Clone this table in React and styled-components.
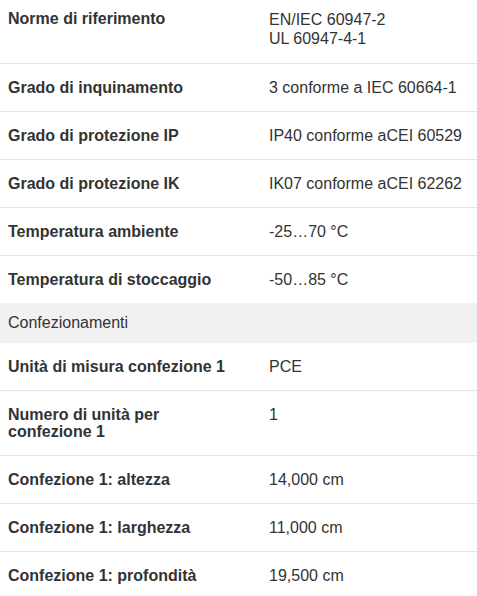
import React from 'react'
import styled, { createGlobalStyle } from 'styled-components'

const GlobalStyle = createGlobalStyle`
	body {
		margin: 0;
		background: #fff;
		font-family: 'Liberation Sans', Arial, Helvetica, sans-serif;
		color: #333;
		overflow: hidden;
	}
`

const Sheet = styled.div`
	width: 477px;
	margin-top: -5px;
`

const Row = styled.div`
	display: grid;
	grid-template-columns: 235px 1fr;
	column-gap: 26px;
	padding: 15px 0 15px 8px;
	border-bottom: ${(p) => (p.last ? 'none' : '1px solid #e3e3e3')};
	font-size: 16px;
	line-height: 17px;
`

const Label = styled.div`
	font-weight: 700;
	color: #333;
`

const Value = styled.div`
	color: #333;
	line-height: ${(p) => (p.multi ? '19px' : '17px')};
`

const Section = styled.div`
	display: flex;
	align-items: center;
	height: 40px;
	padding-left: 8px;
	background: #f1f1f1;
	font-size: 16px;
	color: #333;
`

const general = [
	['Norme di riferimento', ['EN/IEC 60947-2', 'UL 60947-4-1']],
	['Grado di inquinamento', ['3 conforme a IEC 60664-1']],
	['Grado di protezione IP', ['IP40 conforme aCEI 60529']],
	['Grado di protezione IK', ['IK07 conforme aCEI 62262']],
	['Temperatura ambiente', ['-25…70 °C']],
	['Temperatura di stoccaggio', ['-50…85 °C']],
]

const packaging = [
	['Unità di misura confezione 1', ['PCE']],
	['Numero di unità per confezione 1', ['1']],
	['Confezione 1: altezza', ['14,000 cm']],
	['Confezione 1: larghezza', ['11,000 cm']],
	['Confezione 1: profondità', ['19,500 cm']],
]

const SpecRow = ({ label, values, last }) => (
	<Row last={last}>
		<Label>{label}</Label>
		<Value multi={values.length > 1}>
			{values.map((v) => (
				<div key={v}>{v}</div>
			))}
		</Value>
	</Row>
)

const App = () => {
	return (
		<Sheet>
			<GlobalStyle />
			{general.map(([label, values], i) => (
				<SpecRow key={label} label={label} values={values} last={i === general.length - 1} />
			))}
			<Section>Confezionamenti</Section>
			{packaging.map(([label, values]) => (
				<SpecRow key={label} label={label} values={values} />
			))}
		</Sheet>
	)
}

export default App
